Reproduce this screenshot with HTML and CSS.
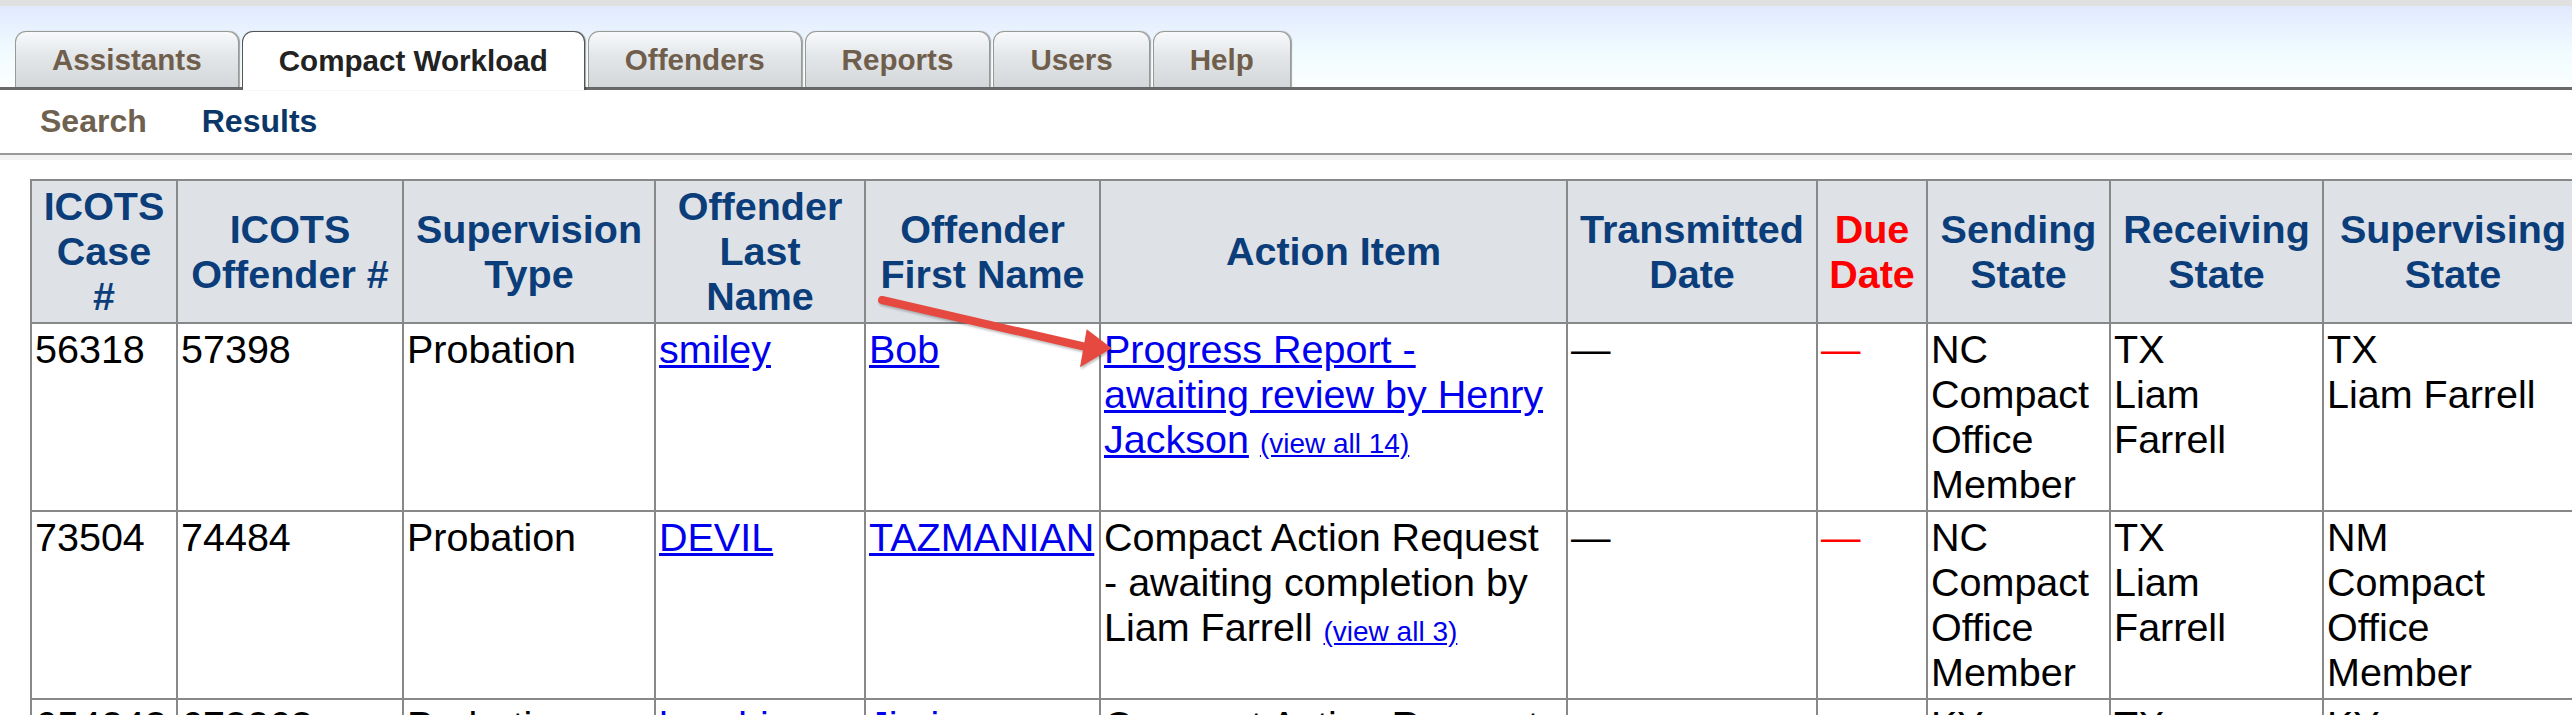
FILE: index.html
```html
<!DOCTYPE html>
<html>
  <head>
    <title>Compact Workload - Results</title>
    <link rel="stylesheet" href="styles.css">
  </head>
  <body>
    <div class="topbar"></div>

    <div class="tabbar">
      <a class="tab" href="#">Assistants</a>
      <a class="tab active" href="#">Compact Workload</a>
      <a class="tab" href="#">Offenders</a>
      <a class="tab" href="#">Reports</a>
      <a class="tab" href="#">Users</a>
      <a class="tab" href="#">Help</a>
    </div>

    <div class="subnav">
      <a class="subnav-link" href="#">Search</a>
      <span class="subnav-current">Results</span>
    </div>

    <div class="content">
      <table class="workload">
        <colgroup>
          <col style="width: 146px">
          <col style="width: 226px">
          <col style="width: 252px">
          <col style="width: 210px">
          <col style="width: 235px">
          <col style="width: 467px">
          <col style="width: 250px">
          <col style="width: 110px">
          <col style="width: 183px">
          <col style="width: 213px">
          <col style="width: 260px">
        </colgroup>
        <thead>
          <tr>
            <th>ICOTS<br>Case<br>#</th>
            <th>ICOTS<br>Offender #</th>
            <th>Supervision<br>Type</th>
            <th>Offender<br>Last<br>Name</th>
            <th>Offender<br>First Name</th>
            <th>Action Item</th>
            <th>Transmitted<br>Date</th>
            <th class="due">Due<br>Date</th>
            <th>Sending<br>State</th>
            <th>Receiving<br>State</th>
            <th>Supervising<br>State</th>
          </tr>
        </thead>
        <tbody>
          <tr>
            <td>56318</td>
            <td>57398</td>
            <td>Probation</td>
            <td><a href="#">smiley</a></td>
            <td><a href="#">Bob</a></td>
            <td class="action"><a href="#">Progress Report - awaiting review by Henry Jackson</a> <a class="view-all" href="#">(view all 14)</a></td>
            <td>&mdash;</td>
            <td class="due">&mdash;</td>
            <td>NC<br>Compact Office Member</td>
            <td>TX<br>Liam Farrell</td>
            <td>TX<br>Liam Farrell</td>
          </tr>
          <tr>
            <td>73504</td>
            <td>74484</td>
            <td>Probation</td>
            <td><a href="#">DEVIL</a></td>
            <td><a href="#">TAZMANIAN</a></td>
            <td class="action">Compact Action Request - awaiting completion by Liam Farrell <a class="view-all" href="#">(view all 3)</a></td>
            <td>&mdash;</td>
            <td class="due">&mdash;</td>
            <td>NC<br>Compact Office Member</td>
            <td>TX<br>Liam Farrell</td>
            <td>NM<br>Compact Office Member</td>
          </tr>
          <tr>
            <td>654243</td>
            <td>673263</td>
            <td>Probation</td>
            <td><a href="#">hendrix</a></td>
            <td><a href="#">Jimi</a></td>
            <td class="action">Compact Action Request - awaiting completion by Liam Farrell</td>
            <td>&mdash;</td>
            <td class="due">&mdash;</td>
            <td>KY<br>Compact Office Member</td>
            <td>TX<br>Liam Farrell</td>
            <td>KY<br>Compact Office Member</td>
          </tr>
        </tbody>
      </table>
    </div>

    <!-- annotation arrow pointing at the action item link -->
    <svg class="callout" viewBox="0 0 260 90" width="260" height="90">
      <line x1="12" y1="10" x2="216" y2="57" stroke="#e5493f" stroke-width="8" stroke-linecap="round" />
      <polygon points="216.7,39.3 241.7,58.3 210,77.3" fill="#e5493f" />
    </svg>
  </body>
</html>
```

FILE: styles.css
```css
body {
  margin: 0;
  background-color: #fff;
  font-family: "Liberation Sans", Arial, sans-serif;
  overflow: hidden; /* table runs past the window */
}

.topbar {
  height: 6px;
  background-color: #e0e0e0;
}

/* Main tabs */
.tabbar {
  display: flex;
  align-items: flex-end;
  height: 81px;
  padding-left: 15px;
  background: linear-gradient(#e1e9fd, #f1fcff 60%, #fbfeff);
  border-bottom: 3px solid #696969;
}

.tab {
  display: flex;
  align-items: center;
  height: 56px;
  box-sizing: border-box;
  padding: 0 36px;
  margin-right: 3px;
  font-size: 29.6px;
  font-weight: bold;
  color: #705e4c;
  text-decoration: none;
  background: linear-gradient(#f7f9fb, #e3e6e9 45%, #d3d7da);
  border: 1px solid #9a9a94;
  border-bottom: none;
  border-radius: 11px 11px 0 0;
  box-shadow: 1px 0 1px rgba(0, 0, 0, 0.35);
}

.tab.active {
  height: 59px;
  margin-bottom: -3px; /* sit over the bar's bottom line */
  color: #222;
  background: #fff;
  border-color: #555;
}

/* Second level nav */
.subnav {
  display: flex;
  align-items: center;
  gap: 55px;
  height: 63px;
  padding-left: 40px;
  font-size: 32px;
  font-weight: bold;
  border-bottom: 2px solid #999;
}

.subnav-link {
  color: #6e6150;
  text-decoration: none;
}

.subnav-current {
  color: #0b3668;
}

.content {
  padding: 19px 0 0 30px;
  border-top: 5px solid #f3f3f3;
}

/* Results table */
.workload {
  table-layout: fixed;
  width: 2552px;
  border-collapse: collapse;
}

.workload th,
.workload td {
  padding: 3px;
  border: 2px solid #888;
  font-size: 39.5px;
  line-height: 45px;
}

.workload th {
  background-color: #dee2e6;
  color: #0b3d7a;
  text-align: center;
  vertical-align: middle;
}

.workload td {
  color: #000;
  text-align: left;
  vertical-align: top;
}

.workload td.action {
  padding-right: 10px;
}

.workload .due {
  color: #f00;
}

.workload a {
  color: #0000ee;
}

.view-all {
  font-size: 28px;
}

.callout {
  position: absolute;
  left: 870px;
  top: 290px;
  filter: drop-shadow(1px 2px 1px rgba(0, 0, 0, 0.25));
}
```
